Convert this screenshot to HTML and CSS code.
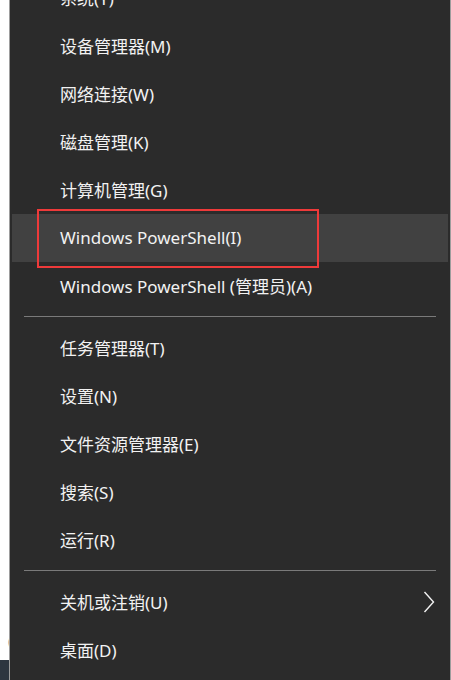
FILE: index.html
```html
<!DOCTYPE html>
<html lang="zh-CN">
<head>
    <meta charset="UTF-8">
    <meta name="viewport" content="width=device-width, initial-scale=1.0">
    <title>Win+X 菜单</title>
    <link rel="stylesheet" href="styles.css">
</head>
<body>

<div class="screen">
    <div class="desk-edge">
        <span class="edge-glyph">(</span>
        <div class="edge-taskbar"></div>
    </div>

    <div class="menu">
        <div class="item">系统(Y)</div>
        <div class="item">设备管理器(M)</div>
        <div class="item">网络连接(W)</div>
        <div class="item">磁盘管理(K)</div>
        <div class="item">计算机管理(G)</div>
        <div class="item hover">
            <span class="mark"></span>
            Windows PowerShell(I)
        </div>
        <div class="item">Windows PowerShell (管理员)(A)</div>
        <div class="sep"></div>
        <div class="item">任务管理器(T)</div>
        <div class="item">设置(N)</div>
        <div class="item">文件资源管理器(E)</div>
        <div class="item">搜索(S)</div>
        <div class="item">运行(R)</div>
        <div class="sep"></div>
        <div class="item sub">
            关机或注销(U)
            <svg class="chevron" width="12" height="22" viewBox="0 0 12 22">
                <path d="M1.5 1 L10.5 11 L1.5 21" fill="none" stroke="#f2f2f2" stroke-width="1.4"/>
            </svg>
        </div>
        <div class="item">桌面(D)</div>
    </div>
</div>

</body>
</html>
```

FILE: styles.css
```css
body {
    margin: 0;
    background: #ffffff;
    font-family: "Noto Sans", "Noto Sans CJK SC", sans-serif;
    overflow: hidden;
}
.screen {
    display: flex;
    height: 680px;
    overflow: hidden;
}
.desk-edge {
    width: 9px;
    display: flex;
    flex-direction: column;
    align-items: flex-end;
}
.edge-glyph {
    margin-top: 633px;
    margin-right: -3px;
    font-size: 13px;
    line-height: 16px;
    color: #8a8a8a;
}
.edge-taskbar {
    margin-top: 11px;
    width: 9px;
    flex: 1;
    background: #2e3640;
}
.menu {
    width: 440px;
    background: #2b2b2b;
    border-left: 1px solid #9d9d9d;
    border-right: 1px solid #9d9d9d;
    margin-top: -26px;
    height: 720px;
}
.item {
    position: relative;
    box-sizing: border-box;
    height: 48px;
    margin: 0 2px;
    padding: 0 0 2px 48px;
    display: flex;
    align-items: center;
    font-size: 17px;
    color: #f2f2f2;
}
.item.hover {
    background: #414141;
}
.mark {
    position: absolute;
    left: 25px;
    top: -5px;
    width: 278px;
    height: 55px;
    border: 2px solid #ee3a3a;
}
.sep {
    height: 1px;
    margin: 6px 14px 7px 14px;
    background: #7a7a7a;
}
.chevron {
    position: absolute;
    right: 13px;
    top: 13px;
}
```
